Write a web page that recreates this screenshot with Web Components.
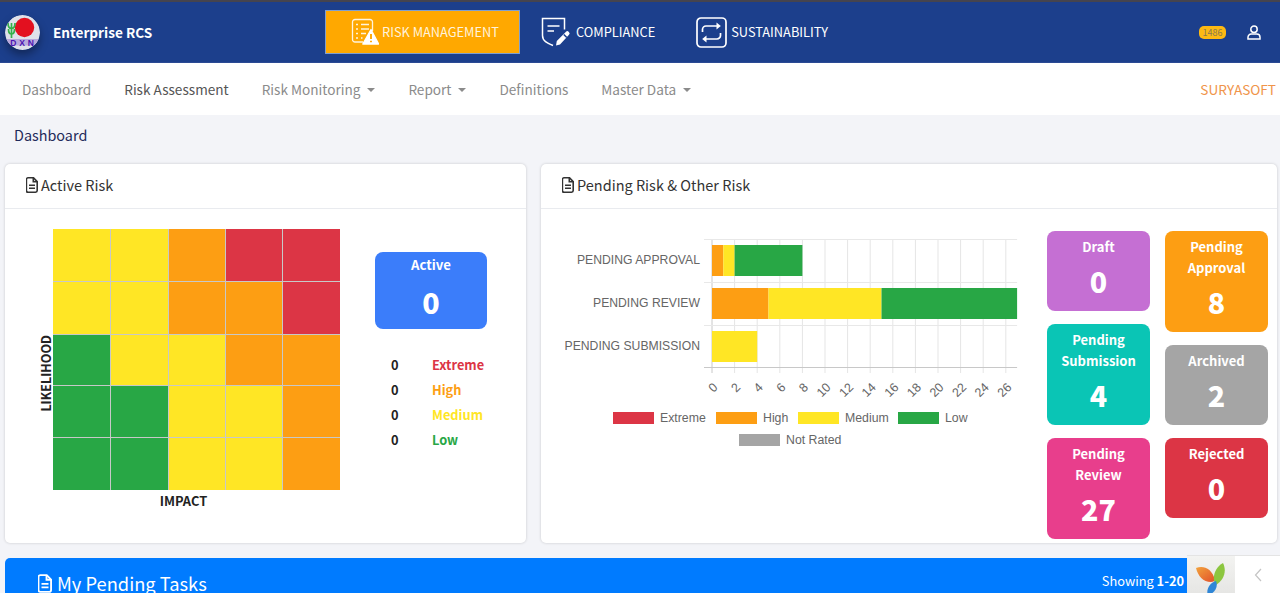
<!DOCTYPE html>
<html lang="en">
<head>
<meta charset="utf-8">
<title>Enterprise RCS</title>
<style>
  html, body { margin: 0; height: 593px; overflow: hidden; }
  body {
    background: #f3f4f8;
    color: #333;
    font-family: "Noto Sans CJK JP", "Noto Sans", sans-serif;
  }
</style>
</head>
<body>
<app-header></app-header>
<main-nav></main-nav>
<page-body>
  <span slot="title">Dashboard</span>
  <risk-card slot="left" style="width:521px">
    <span slot="title">Active Risk</span>
    <active-risk></active-risk>
  </risk-card>
  <risk-card slot="right" style="width:736px">
    <span slot="title">Pending Risk &amp; Other Risk</span>
    <pending-risk></pending-risk>
  </risk-card>
  <task-bar slot="bottom"></task-bar>
</page-body>
<debug-toolbar></debug-toolbar>

<script>
const fileIcon = (color, w = 12, h = 16) => `
  <svg width="${w}" height="${h}" viewBox="0 0 12 16" fill="none" stroke="${color}" stroke-width="1.600" style="flex:none">
    <path d="M2 .8h5.500l3.700 3.800v9a1.600 1.600 0 0 1-1.600 1.600h-7.600a1.600 1.600 0 0 1-1.600-1.600v-11.200a1.600 1.600 0 0 1 1.600-1.600z"/>
    <path d="M7.300 .8v4h3.900M3 8.300h6M3 11.300h6"/>
  </svg>`

class AppHeader extends HTMLElement {
  constructor () {
    super()
    this.shadow = this.attachShadow({ mode: 'open' })
  }

  connectedCallback () {
    this.shadow.innerHTML = /* html */`
      <style>
        :host {
          display: flex;
          align-items: center;
          height: 60px;
          border-top: 2px solid #45444f;
          border-bottom: 1px solid #2b4a94;
          background: #1c3f8c;
          color: #fff;
        }
        .brand {
          flex: 0 0 325px;
          display: flex;
          align-items: center;
          gap: 13px;
          padding-left: 5px;
          box-sizing: border-box;
          font-size: 13.600px;
          font-weight: 700;
        }
        .logo { border-radius: 50%; box-shadow: 0 5px 8px rgba(0, 0, 0, .35); display: block; }
        .tab {
          display: flex;
          align-items: center;
          font-size: 12.800px;
          line-height: 20px;
        }
        .tab.active {
          width: 195px;
          height: 44px;
          justify-content: center;
          gap: 3px;
          padding-left: 5px;
          margin-right: 21px;
          box-sizing: border-box;
          border: 1px solid #7f9fd0;
          background: #ffa800;
          color: #fff3dc;
        }
        .tab.compliance { gap: 5px; margin-right: 41px; }
        .tab.sustain { gap: 4px; }
        .tools {
          margin-left: auto;
          padding-right: 19px;
          display: flex;
          align-items: center;
          gap: 21px;
        }
        .badge {
          width: 27px;
          height: 13px;
          border-radius: 5px;
          background: #fdb913;
          color: #8a7a50;
          font-size: 9px;
          line-height: 13px;
          text-align: center;
        }
      </style>
      <div class="brand">
        <svg class="logo" width="35" height="35" viewBox="0 0 35 35">
          <circle cx="17.500" cy="17.500" r="17.500" fill="#dfe1ea"/>
          <circle cx="19.500" cy="12.500" r="9.700" fill="#e3101f"/>
          <path d="M6.500 8v15M3 8c0 4 1.500 5.500 3.500 5.500s3.500-1.500 3.500-5.500M3.500 14c0 3 1 5 3 5s3-2 3-5" fill="none" stroke="#35b04a" stroke-width="1.700"/>
          <path d="M1.500 24h32a17.500 17.500 0 0 1-3.500 6.500h-25a17.500 17.500 0 0 1-3.500-6.500z" fill="#b9a8dc"/>
          <text x="18.500" y="31" text-anchor="middle" font-size="8.500" font-weight="700" fill="#4a14b0" letter-spacing="2.800" font-family="Liberation Sans, sans-serif">DXN</text>
        </svg>
        <span>Enterprise RCS</span>
      </div>
      <div class="tab active">
        <svg width="28" height="28" viewBox="0 0 28 28" fill="none" stroke="#fff3dc" stroke-width="1.300">
          <path d="M12 24H4a2.500 2.500 0 0 1-2.500-2.500V4A2.500 2.500 0 0 1 4 1.500h15A2.500 2.500 0 0 1 21.500 4v9"/>
          <path d="M5 6.500h2M10 6.500h8M5 11h2M10 11h8M5 15.500h2M10 15.500h5M5 20h2M10 20h1.500"/>
          <path d="M20 11.500l7.700 14.500H11.800z" fill="#fff" stroke="#fff" stroke-linejoin="round"/>
          <path d="M20 16v5M20 22.700v1.500" stroke="#ffa800" stroke-width="1.900"/>
        </svg>
        <span>RISK MANAGEMENT</span>
      </div>
      <div class="tab compliance">
        <svg width="30" height="30" viewBox="0 0 30 30" fill="none" stroke="#fff" stroke-width="1.500">
          <path d="M12 28.500c-6-2.500-10.500-4.500-10.500-10V1.500h22v11"/>
          <path d="M6.500 9h12M6.500 14h6.500"/>
          <path d="M15 28.500l.8-4.500L25 14.800a1.800 1.800 0 0 1 2.600 0l.4.400a1.800 1.800 0 0 1 0 2.600L19 27.500z" fill="#fff" stroke="none"/>
          <path d="M22.800 17.500l3 3" stroke="#1c3f8c"/>
        </svg>
        <span>COMPLIANCE</span>
      </div>
      <div class="tab sustain">
        <svg width="31" height="31" viewBox="0 0 31 31" fill="none" stroke="#fff" stroke-width="1.700">
          <rect x="1" y="1" width="29" height="29" rx="4"/>
          <path d="M6.500 15v-2.500a3.500 3.500 0 0 1 3.500-3.500h13"/>
          <path d="M24.500 16v2.500a3.500 3.500 0 0 1-3.500 3.500H8"/>
          <path d="M20.500 5.500L24.800 9l-4.300 3.500z" fill="#fff" stroke="none"/>
          <path d="M10.500 18.500L6.200 22l4.300 3.500z" fill="#fff" stroke="none"/>
        </svg>
        <span>SUSTAINABILITY</span>
      </div>
      <div class="tools">
        <div class="badge">1486</div>
        <svg width="14" height="15" viewBox="0 0 14 15" fill="none" stroke="#fff" stroke-width="1.500">
          <circle cx="7" cy="4.200" r="3.200"/>
          <path d="M1 14v-1.800A3.200 3.200 0 0 1 4.200 9h5.600a3.200 3.200 0 0 1 3.200 3.200V14z"/>
        </svg>
      </div>
    `
  }
}

class MainNav extends HTMLElement {
  constructor () {
    super()
    this.shadow = this.attachShadow({ mode: 'open' })
  }

  connectedCallback () {
    const items = [
      ['Dashboard', false, false],
      ['Risk Assessment', true, false],
      ['Risk Monitoring', false, true],
      ['Report', false, true],
      ['Definitions', false, false],
      ['Master Data', false, true]
    ]
    this.shadow.innerHTML = /* html */`
      <style>
        :host {
          display: flex;
          align-items: center;
          height: 52px;
          padding: 0 4px 1px 22px;
          box-sizing: border-box;
          background: #fff;
          font-size: 13.600px;
          color: #8b8b8b;
        }
        .items { display: flex; gap: 33px; }
        .on { color: #555; }
        .caret {
          display: inline-block;
          margin-left: 7px;
          vertical-align: 3px;
          border: 4px solid transparent;
          border-top-color: #8b8b8b;
          border-bottom: 0;
        }
        .org { margin-left: auto; color: #f0944a; }
      </style>
      <div class="items">
        ${items.map(([name, on, caret]) => `<span class="${on ? 'on' : ''}">${name}${caret ? '<i class="caret"></i>' : ''}</span>`).join('')}
      </div>
      <span class="org">SURYASOFT</span>
    `
  }
}

class PageBody extends HTMLElement {
  constructor () {
    super()
    this.shadow = this.attachShadow({ mode: 'open' })
  }

  connectedCallback () {
    this.shadow.innerHTML = /* html */`
      <style>
        :host { display: block; padding: 0 3px 0 5px; }
        .title {
          height: 49px;
          padding-left: 9px;
          font-size: 14.400px;
          line-height: 39px;
          color: #1f2a5a;
        }
        .cards { display: flex; gap: 15px; margin-bottom: 15px; }
      </style>
      <div class="title"><slot name="title"></slot></div>
      <div class="cards">
        <slot name="left"></slot>
        <slot name="right"></slot>
      </div>
      <slot name="bottom"></slot>
    `
  }
}

class RiskCard extends HTMLElement {
  constructor () {
    super()
    this.shadow = this.attachShadow({ mode: 'open' })
  }

  connectedCallback () {
    this.shadow.innerHTML = /* html */`
      <style>
        :host {
          display: block;
          flex: none;
          box-sizing: border-box;
          height: 379px;
          background: #fff;
          border-radius: 5px;
          box-shadow: 0 0 3px rgba(0, 0, 0, .18);
        }
        header {
          display: flex;
          align-items: center;
          gap: 3px;
          height: 45px;
          padding: 0 0 3px 21px;
          box-sizing: border-box;
          border-bottom: 1px solid #e9ebef;
          font-size: 14.500px;
          color: #333;
        }
      </style>
      <header>${fileIcon('#333')}<slot name="title"></slot></header>
      <slot></slot>
    `
  }
}

class ActiveRisk extends HTMLElement {
  constructor () {
    super()
    this.shadow = this.attachShadow({ mode: 'open' })
  }

  connectedCallback () {
    const y = '#ffe625'
    const o = '#fd9e13'
    const r = '#dc3545'
    const g = '#28a745'
    const cells = [
      y, y, o, r, r,
      y, y, o, o, r,
      g, y, y, o, o,
      g, g, y, y, o,
      g, g, y, y, o
    ]
    const rows = [['Extreme', r], ['High', o], ['Medium', y], ['Low', g]]
    this.shadow.innerHTML = /* html */`
      <style>
        :host {
          display: flex;
          padding: 20px 0 0 33px;
          font-weight: 700;
        }
        .side {
          width: 15px;
          height: 261px;
          display: flex;
          align-items: center;
          justify-content: center;
        }
        .side span {
          writing-mode: vertical-rl;
          transform: rotate(180deg);
          font-size: 12.500px;
          line-height: 15px;
          color: #222;
          margin-top: 27px;
        }
        .grid {
          display: grid;
          grid-template-columns: 57px 57px 56px 56px 57px;
          grid-template-rows: 52px 52px 50px 51px 52px;
          gap: 1px;
          width: 287px;
          height: 261px;
          background: #c8c8c8;
        }
        .impact {
          margin-left: 2px;
          width: 287px;
          text-align: center;
          font-size: 12.900px;
          line-height: 22px;
          color: #222;
        }
        .stats { margin-left: 35px; padding-top: 23px; }
        .active {
          width: 112px;
          height: 77px;
          box-sizing: border-box;
          padding-top: 2px;
          border-radius: 8px;
          background: #3b7dfa;
          color: #fff;
          text-align: center;
          font-size: 13.200px;
          line-height: 21px;
        }
        .active b { display: block; font-size: 28.600px; line-height: 46px; margin-top: 4px; }
        table { margin: 23px 0 0 0; border-spacing: 0; font-size: 12.800px; }
        td { height: 25px; padding: 0; }
        td:first-child { width: 57px; padding-left: 16px; color: #222; box-sizing: border-box; }
      </style>
      <div>
        <div style="display:flex">
          <div class="side"><span>LIKELIHOOD</span></div>
          <div class="grid">${cells.map(c => `<div style="background:${c}"></div>`).join('')}</div>
        </div>
        <div class="impact">IMPACT</div>
      </div>
      <div class="stats">
        <div class="active">Active<b>0</b></div>
        <table>${rows.map(([n, c]) => `<tr><td>0</td><td style="color:${c}">${n}</td></tr>`).join('')}</table>
      </div>
    `
  }
}

class RiskTile extends HTMLElement {
  constructor () {
    super()
    this.shadow = this.attachShadow({ mode: 'open' })
  }

  connectedCallback () {
    this.shadow.innerHTML = /* html */`
      <style>
        :host {
          display: block;
          flex: none;
          box-sizing: border-box;
          width: 103px;
          padding-top: 5px;
          border-radius: 8px;
          color: #fff;
          text-align: center;
          font-size: 13px;
          font-weight: 700;
          line-height: 21px;
        }
        b { display: block; font-size: 28.600px; line-height: 46px; margin-top: 1px; }
      </style>
      <slot></slot>
      <b>${this.getAttribute('value')}</b>
    `
    this.style.background = this.getAttribute('color')
    this.style.height = this.getAttribute('h') + 'px'
  }
}

class PendingChart extends HTMLElement {
  constructor () {
    super()
    this.shadow = this.attachShadow({ mode: 'open' })
  }

  connectedCallback () {
    const colors = { ex: '#dc3545', hi: '#fd9e13', me: '#ffe625', lo: '#28a745', no: '#a5a5a5' }
    const left = 171
    const unit = 11.3
    const top = 8
    const px = v => left + v * unit
    let grid = ''
    let ticks = ''
    for (let v = 0; v <= 26; v += 2) {
      grid += `<line x1="${px(v)}" x2="${px(v)}" y1="${top}" y2="${top + 134}" stroke="${v ? '#e5e5e5' : '#c8c8c8'}"/>`
      ticks += `<text transform="translate(${px(v) + 6.500} ${top + 149}) rotate(-45)" text-anchor="end" fill="#666">${v}</text>`
    }
    const end = px(27)
    ;[0, 43, 86, 128].forEach((d, i) => {
      grid += `<line x1="163" x2="${end}" y1="${top + d + .5}" y2="${top + d + .5}" stroke="${i === 3 ? '#c8c8c8' : '#e8e8e8'}"/>`
    })
    const rows = [
      ['PENDING APPROVAL', 0, [['hi', 0, 1], ['me', 1, 2], ['lo', 2, 8]]],
      ['PENDING REVIEW', 43, [['hi', 0, 5], ['me', 5, 15], ['lo', 15, 27]]],
      ['PENDING SUBMISSION', 86, [['me', 0, 4]]]
    ]
    const bars = rows.map(([name, d, parts]) => `
      <text x="159" y="${top + d + 25}" text-anchor="end" fill="#666" font-size="12.200">${name}</text>
      ${parts.map(([c, a, b]) => `<rect x="${px(a)}" y="${top + d + 6}" width="${(b - a) * unit}" height="31" fill="${colors[c]}"/>`).join('')}
    `).join('')
    const legend = [
      ['Extreme', 'ex', 72, 0], ['High', 'hi', 175, 0], ['Medium', 'me', 257, 0], ['Low', 'lo', 357, 0], ['Not Rated', 'no', 198, 22]
    ].map(([name, c, x, dy]) => `
      <rect x="${x}" y="${181 + dy}" width="41" height="12" fill="${colors[c]}"/>
      <text x="${x + 47}" y="${191 + dy}" fill="#666" font-size="12.300">${name}</text>
    `).join('')
    this.shadow.innerHTML = /* html */`
      <style>
        :host { display: block; width: 500px; flex: none; }
        svg { display: block; font-family: "Liberation Sans", Arial, sans-serif; font-size: 12.500px; }
      </style>
      <svg width="500" height="250">${grid}${bars}${ticks}${legend}</svg>
    `
  }
}

class PendingRisk extends HTMLElement {
  constructor () {
    super()
    this.shadow = this.attachShadow({ mode: 'open' })
  }

  connectedCallback () {
    this.shadow.innerHTML = /* html */`
      <style>
        :host { display: flex; padding-top: 22px; }
        .tiles { display: flex; gap: 15px; margin-left: 6px; }
        .col { display: flex; flex-direction: column; gap: 13px; }
      </style>
      <pending-chart></pending-chart>
      <div class="tiles">
        <div class="col">
          <risk-tile color="#c56fd3" value="0" h="80">Draft</risk-tile>
          <risk-tile color="#0ac5b5" value="4" h="101">Pending<br>Submission</risk-tile>
          <risk-tile color="#e83e8c" value="27" h="101">Pending<br>Review</risk-tile>
        </div>
        <div class="col">
          <risk-tile color="#fd9e13" value="8" h="101">Pending<br>Approval</risk-tile>
          <risk-tile color="#a5a5a5" value="2" h="80">Archived</risk-tile>
          <risk-tile color="#dc3545" value="0" h="80">Rejected</risk-tile>
        </div>
      </div>
    `
  }
}

class TaskBar extends HTMLElement {
  constructor () {
    super()
    this.shadow = this.attachShadow({ mode: 'open' })
  }

  connectedCallback () {
    this.shadow.innerHTML = /* html */`
      <style>
        :host {
          display: flex;
          align-items: flex-start;
          height: 60px;
          padding: 12px 93px 0 33px;
          box-sizing: border-box;
          border-radius: 5px 5px 0 0;
          background: #007bff;
          color: #fff;
        }
        h2 {
          display: flex;
          align-items: center;
          gap: 5px;
          margin: 0;
          font-size: 18.300px;
          font-weight: 400;
          line-height: 26px;
        }
        span { margin-left: auto; font-size: 12.800px; line-height: 22px; }
      </style>
      <h2>${fileIcon('#fff', 14, 19)}My Pending Tasks</h2>
      <span>Showing <b>1-20</b></span>
    `
  }
}

class DebugToolbar extends HTMLElement {
  constructor () {
    super()
    this.shadow = this.attachShadow({ mode: 'open' })
  }

  connectedCallback () {
    this.shadow.innerHTML = /* html */`
      <style>
        :host {
          position: fixed;
          right: 0;
          bottom: 0;
          display: flex;
          height: 38px;
          background: #fff;
          border-top: 1px solid #e4e4e4;
          box-sizing: border-box;
        }
        .logo {
          width: 48px;
          background: linear-gradient(#f3f3f1, #e6e6e4);
        }
        .logo svg { display: block; margin: 7px 0 0 9px; }
        .toggle {
          width: 45px;
          display: flex;
          justify-content: center;
          align-items: center;
        }
      </style>
      <div class="logo">
        <svg width="30" height="30" viewBox="0 0 30 30">
          <defs>
            <linearGradient id="petal" x1="0" y1="0" x2="1" y2="1">
              <stop offset="0" stop-color="#f2a33c"/>
              <stop offset="1" stop-color="#e2502a"/>
            </linearGradient>
          </defs>
          <path d="M0 5c7-3 16 0 19 12-1 1-2 2-4 2C7 19 2 13 0 5z" fill="url(#petal)"/>
          <path d="M27 0c4 8 1 17-7 22-5-6-1-18 7-22z" fill="#8cc63f"/>
          <path d="M20 18c2 5 0 10-5 13h-3.500c-1-5 2-11 8.500-13z" fill="#2f86d6"/>
        </svg>
      </div>
      <div class="toggle">
        <svg width="8" height="14" viewBox="0 0 8 14" fill="none" stroke="#c4c4c4" stroke-width="1.200">
          <path d="M7 1L1.500 7 7 13"/>
        </svg>
      </div>
    `
  }
}

customElements.define('app-header', AppHeader)
customElements.define('main-nav', MainNav)
customElements.define('page-body', PageBody)
customElements.define('risk-card', RiskCard)
customElements.define('active-risk', ActiveRisk)
customElements.define('risk-tile', RiskTile)
customElements.define('pending-chart', PendingChart)
customElements.define('pending-risk', PendingRisk)
customElements.define('task-bar', TaskBar)
customElements.define('debug-toolbar', DebugToolbar)
</script>
</body>
</html>
